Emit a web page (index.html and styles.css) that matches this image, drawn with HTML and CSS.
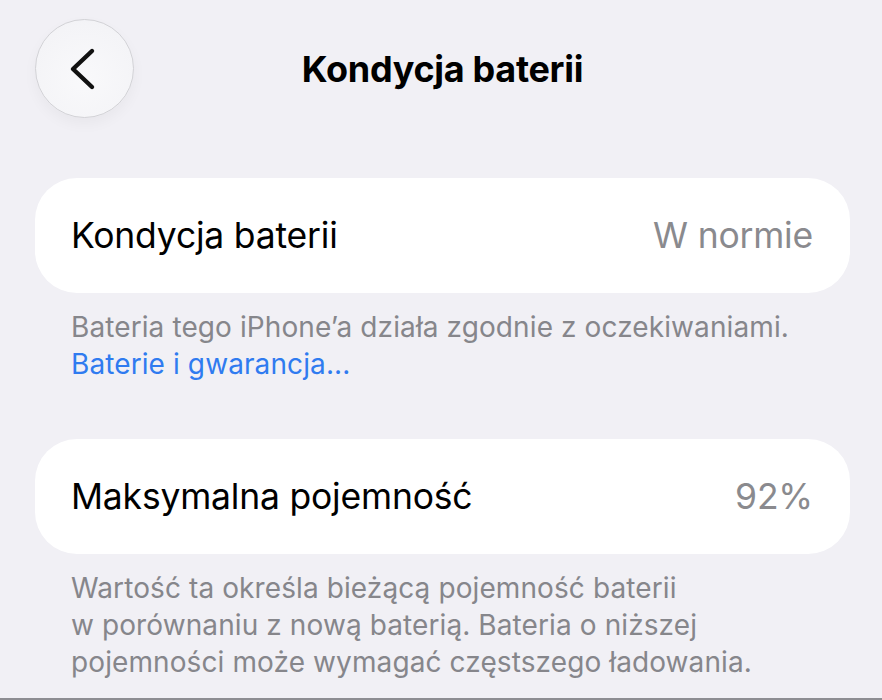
FILE: index.html
```html
<!DOCTYPE html>
<html lang="pl">
<head>
<meta charset="utf-8">
<title>Kondycja baterii</title>
<link rel="stylesheet" href="styles.css">
</head>
<body>
<div class="screen">
  <header class="nav">
    <button class="back" aria-label="Wstecz">
      <svg width="30" height="44" viewBox="0 0 30 44">
        <path d="M24 4 L5 22 L24 40" fill="none" stroke="#111" stroke-width="4.4" stroke-linecap="round" stroke-linejoin="round"/>
      </svg>
    </button>
    <h1 class="title">Kondycja baterii</h1>
  </header>

  <section class="group">
    <div class="cell">
      <span class="cell-label">Kondycja baterii</span>
      <span class="cell-value">W normie</span>
    </div>
    <p class="footer">Bateria tego iPhone’a działa zgodnie z oczekiwaniami.<br><a class="link" href="#">Baterie i gwarancja...</a></p>
  </section>

  <section class="group">
    <div class="cell">
      <span class="cell-label">Maksymalna pojemność</span>
      <span class="cell-value">92%</span>
    </div>
    <p class="footer">Wartość ta określa bieżącą pojemność baterii<br>w porównaniu z nową baterią. Bateria o niższej<br>pojemności może wymagać częstszego ładowania.</p>
  </section>
</div>
</body>
</html>
```

FILE: styles.css
```css
* { box-sizing: border-box; }

html, body {
  margin: 0;
  height: 100%;
}

body {
  background: #f1f0f5;
  font-family: Inter, "Noto Sans", "Liberation Sans", sans-serif;
  color: #000;
  overflow: hidden;
}

.screen {
  height: 700px;
  padding: 19px 32px 0 35px;
  border-bottom: 2px solid #8d8d92;
}

.nav {
  position: relative;
  display: flex;
  align-items: center;
  justify-content: center;
  height: 99px;
  margin-bottom: 60px;
}

.back {
  position: absolute;
  left: 0;
  top: 0;
  width: 99px;
  height: 99px;
  border-radius: 50%;
  border: 1px solid #d2d2d6;
  background: radial-gradient(circle at 50% 60%, #f9f9fb 0%, #f4f4f7 70%, #efeff3 100%);
  box-shadow: 0 6px 14px rgba(0, 0, 0, 0.04);
  display: flex;
  align-items: center;
  justify-content: center;
  padding: 0 4px 0 0;
}

.title {
  margin: 0;
  font-size: 36px;
  font-weight: 700;
  letter-spacing: -0.3px;
}

.group {
  margin-bottom: 56px;
}

.cell {
  height: 115px;
  background: #fff;
  border-radius: 42px;
  display: flex;
  align-items: center;
  justify-content: space-between;
  padding: 0 37px 0 36px;
  font-size: 35.5px;
  letter-spacing: -0.2px;
}

.cell-value {
  color: #8a8a8e;
}

.footer {
  margin: 16px 0 0 36px;
  font-size: 28px;
  line-height: 37px;
  color: #86868b;
  letter-spacing: 0.1px;
}

.link {
  color: #2f7bf0;
  text-decoration: none;
}
```
